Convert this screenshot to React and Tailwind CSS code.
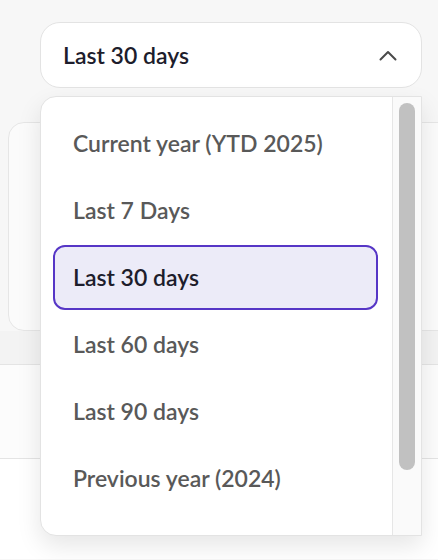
const options = [
  "Current year (YTD 2025)",
  "Last 7 Days",
  "Last 30 days",
  "Last 60 days",
  "Last 90 days",
  "Previous year (2024)",
];

function ChevronUp() {
  return (
    <svg width="18" height="11" viewBox="0 0 18 11" fill="none">
      <polyline
        points="1.5,9.5 9,2 16.5,9.5"
        stroke="#4a4a4a"
        strokeWidth="2"
        strokeLinecap="round"
        strokeLinejoin="round"
      />
    </svg>
  );
}

export default function App() {
  const selected = "Last 30 days";

  return (
    <div className="relative h-[560px] w-[438px] overflow-hidden bg-[#f7f7f7] font-['Lato','Liberation_Sans',sans-serif]">
      {/* page behind the menu */}
      <div className="h-[122px]" />
      <div className="ml-[8px] mr-[-20px] h-[209px] rounded-2xl border border-[#e6e6e6] bg-[#fbfbfb]" />
      <div className="h-[34px] border-b border-[#e4e4e4] bg-[#f3f3f3]" />
      <div className="h-[94px] border-b border-[#e4e4e4] bg-[#fcfcfc]" />
      <div className="h-[100px] bg-white" />

      {/* trigger */}
      <button className="absolute left-[40px] top-[22px] flex h-[66px] w-[382px] items-center justify-between rounded-[20px] border border-[#e3e3e3] bg-white pl-[22px] pr-[24px]">
        <span className="text-[23px] font-semibold text-[#1d1d2c]">
          Last 30 days
        </span>
        <ChevronUp />
      </button>

      {/* menu */}
      <div className="absolute left-[40px] top-[96px] flex h-[440px] w-[382px] overflow-hidden rounded-l-2xl border border-[#e3e3e3] bg-white shadow-[0_10px_24px_rgba(0,0,0,0.10)]">
        <div className="flex-1 overflow-hidden pl-[12px] pr-[14px] pt-[14px]">
          <ul className="flex flex-col gap-[2px]">
            {options.map((o) => (
              <li
                key={o}
                className={
                  o === selected
                    ? "flex h-[65px] items-center rounded-xl border-2 border-[#5636c6] bg-[#ecebf8] pl-[18px] text-[23px] font-semibold text-[#1d1d2c]"
                    : "flex h-[65px] items-center pl-[20px] text-[23px] font-semibold text-[#595959]"
                }
              >
                {o}
              </li>
            ))}
          </ul>
        </div>
        <div className="w-[29px] border-l border-[#e6e6e6] bg-[#fafafa] px-[6px] pt-[6px]">
          <div className="h-[367px] rounded-full bg-[#c1c1c1]" />
        </div>
      </div>
    </div>
  );
}
